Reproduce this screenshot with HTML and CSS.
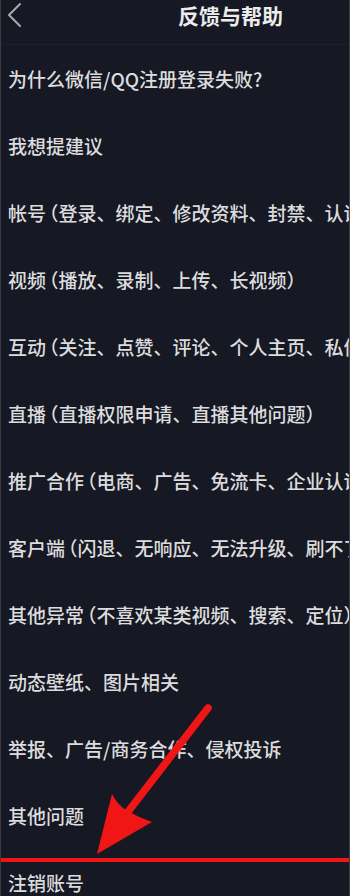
FILE: index.html
```html
<!DOCTYPE html>
<html lang="zh-CN">

<head>
    <meta charset="UTF-8">
    <meta name="viewport" content="width=device-width, initial-scale=1.0">
    <title>反馈与帮助</title>
    <link rel="stylesheet" href="styles.css">
</head>

<body>
    <div class="page">
        <div class="top">
            <svg class="back" width="14" height="26" viewBox="0 0 14 26">
                <polyline points="12,2 1,13 12,24" fill="none" stroke="#a9a9ad" stroke-width="2" stroke-linecap="round" stroke-linejoin="round" />
            </svg>
            <div class="title">反馈与帮助</div>
        </div>
        <div class="list">
            <div class="item">为什么微信/QQ注册登录失败?</div>
            <div class="item">我想提建议</div>
            <div class="item">帐号<span class="p l">（</span>登录、绑定、修改资料、封禁、认证<span class="p">）</span></div>
            <div class="item">视频<span class="p l">（</span>播放、录制、上传、长视频<span class="p">）</span></div>
            <div class="item">互动<span class="p l">（</span>关注、点赞、评论、个人主页、私信<span class="p">）</span></div>
            <div class="item">直播<span class="p l">（</span>直播权限申请、直播其他问题<span class="p">）</span></div>
            <div class="item">推广合作<span class="p l">（</span>电商、广告、免流卡、企业认证<span class="p">）</span></div>
            <div class="item">客户端<span class="p l">（</span>闪退、无响应、无法升级、刷不了<span class="p">）</span></div>
            <div class="item">其他异常<span class="p l">（</span>不喜欢某类视频、搜索、定位<span class="p">）</span></div>
            <div class="item">动态壁纸、图片相关</div>
            <div class="item">举报、广告/商务合作、侵权投诉</div>
            <div class="item">其他问题</div>
            <div class="item">注销账号</div>
        </div>

        <!-- 红色标注 -->
        <div class="mark-line"></div>
        <svg class="mark-arrow" width="350" height="896" viewBox="0 0 350 896">
            <line x1="208" y1="708" x2="124" y2="817" stroke="#f01616" stroke-width="7.5" stroke-linecap="round" />
            <path d="M97,854 L112,794 Q118,806 128,811 Q138,817 152,822 Z" fill="#f01616" />
        </svg>
    </div>
</body>

</html>
```

FILE: styles.css
```css
* {
    padding: 0;
    margin: 0;
}

body {
    background-color: #161823;
    font-family: "Noto Sans CJK SC", "Noto Sans", sans-serif;
    color: #dcdcde;
}

.page {
    position: relative;
    width: 350px;
    height: 896px;
    overflow: hidden;
    border-left: 1px solid #3a3b44;
    border-right: 1px solid #3a3b44;
    box-sizing: border-box;
}

.top {
    height: 45px;
    display: flex;
    align-items: flex-start;
    justify-content: space-between;
    padding: 0 66px 0 7px;
    border-bottom: 1px solid #1d1f2a;
    box-sizing: border-box;
}

.back {
    margin-top: 2px;
}

.title {
    font-size: 21px;
    font-weight: 700;
    line-height: 30px;
    color: #ececee;
}

.item {
    height: 67px;
    display: flex;
    align-items: center;
    padding-left: 7px;
    font-size: 19px;
    font-weight: 500;
    white-space: nowrap;
}

/* 括号用半角宽度 */
.p {
    font-feature-settings: "halt";
}

.p.l {
    padding-left: 3px;
}

/* 标注线和箭头盖在列表上 */
.mark-line {
    position: absolute;
    left: 0;
    top: 858px;
    width: 100%;
    height: 4px;
    background-color: #f01616;
}

.mark-arrow {
    position: absolute;
    left: -1px;
    top: 0;
}
```
